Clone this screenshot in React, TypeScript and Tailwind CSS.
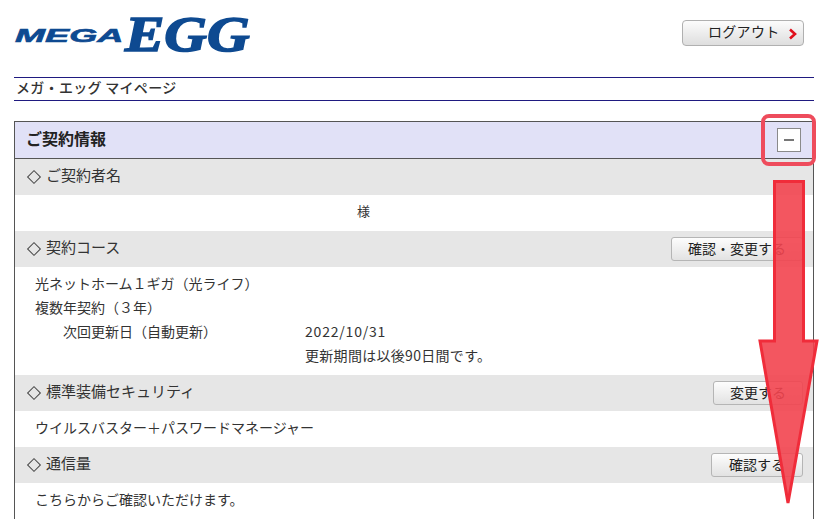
import React from 'react';

const jp = "font-['Noto_Sans_CJK_JP','Noto_Sans',sans-serif]";

const SectionHead = ({ title, action, actionWidth }: { title: string; action?: string; actionWidth?: string }) => (
  <div className="flex h-9 items-center justify-between bg-[#e6e6e6] pl-[11px] pr-[10px]">
    <div className="flex items-center gap-[4px] text-[15px] leading-none text-[#333]">
      <span className="mx-[3px] h-[10px] w-[10px] rotate-45 border border-[#444]" />
      <span className="pb-[5px]">{title}</span>
    </div>
    {action && (
      <button className={`flex h-6 items-center justify-center rounded-[3px] border border-[#b5b5b5] bg-gradient-to-b from-[#fdfdfd] to-[#e2e2e2] pb-[3px] text-sm text-[#222] ${actionWidth}`}>
        {action}
      </button>
    )}
  </div>
);

const Logo = () => (
  <div className="flex h-[36px] items-center italic leading-none text-[#0e4a91]">
    <span className="mt-[3px] w-[110px] origin-left scale-x-[1.9] font-['Liberation_Sans',sans-serif] text-[19px] font-bold [-webkit-text-stroke:0.6px_#0e4a91]">MEGA</span>
    <span className="origin-left scale-x-[1.18] font-['Liberation_Serif',serif] text-[50px] font-bold [-webkit-text-stroke:1.6px_#0e4a91]">EGG</span>
  </div>
);

export default function App() {
  return (
    <div className={`relative h-[519px] w-[830px] overflow-hidden bg-white ${jp}`}>
      <div className="pl-[14px] pr-[16px]">
        <header className="flex h-[77px] items-start justify-between pr-[10px]">
          <div className="pl-px pt-[16px]">
            <Logo />
          </div>
          <button className="relative mt-[20px] flex h-[26px] w-[122px] items-center rounded-[4px] border border-[#b0b0b0] bg-gradient-to-b from-[#fcfcfc] to-[#dedede] pb-[5px] pl-[25px] text-sm tracking-[0.3px] text-[#222]">
            ログアウト
            <svg className="absolute right-[5px] top-[7px]" width="10" height="12" viewBox="0 0 10 12" fill="none">
              <path d="M2 1.5 L7 6 L2 10.5" stroke="#e0101c" strokeWidth="2.6" />
            </svg>
          </button>
        </header>

        <div className="flex h-[24px] items-center border-y border-[#1f1a80] pb-[5px] pl-[2px] text-sm font-medium leading-none tracking-[0.3px] text-[#333]">
          メガ・エッグ マイページ
        </div>

        <section className="mt-[20px] border-x border-t border-[#555]">
          <div className="flex h-[37px] items-center justify-between border-b border-[#555] bg-[#e1e1f7] pl-[11px] pr-[12px]">
            <h2 className="pb-[5px] text-base font-bold text-[#222]">ご契約情報</h2>
            <button className="flex h-6 w-6 items-center justify-center border border-[#8a8a8a] bg-white">
              <span className="h-[2px] w-[10px] bg-[#777]" />
            </button>
          </div>

          <SectionHead title="ご契約者名" />
          <div className="flex h-9 items-center pb-[5px] pl-[342px] text-[13px] text-[#333]">様</div>

          <SectionHead title="契約コース" action="確認・変更する" actionWidth="w-[132px]" />
          <div className="flex h-[108px] flex-col gap-[2px] pl-[20px] pt-[5px] text-sm leading-[22px] text-[#333]">
            <p>光ネットホーム１ギガ（光ライフ）</p>
            <p>複数年契約（３年）</p>
            <div className="flex pl-[28px]">
              <span className="w-[242px]">次回更新日（自動更新）</span>
              <div className="flex flex-col gap-[2px]">
                <span className="tracking-[0.8px]">2022/10/31</span>
                <span className="tracking-[0.3px]">更新期間は以後90日間です。</span>
              </div>
            </div>
          </div>

          <SectionHead title="標準装備セキュリティ" action="変更する" actionWidth="w-[90px]" />
          <div className="flex h-9 items-center pb-[5px] pl-[20px] text-sm text-[#333]">ウイルスバスター＋パスワードマネージャー</div>

          <SectionHead title="通信量" action="確認する" actionWidth="w-[92px]" />
          <div className="flex h-9 items-center pb-[5px] pl-[20px] text-sm text-[#333]">こちらからご確認いただけます。</div>
        </section>
      </div>

      {/* annotation drawn over the screenshot */}
      <div className="absolute left-[761px] top-[114px] h-[52px] w-[55px] rounded-[8px] border-[4px] border-[#ee4c5c]" />
      <svg className="absolute left-0 top-0" width="830" height="519" viewBox="0 0 830 519" fill="none">
        <path
          d="M774.5 181.5 H803.5 V341 H817 L788 503 L760 341 H774.5 Z"
          fill="#f2444f"
          fillOpacity="0.9"
          stroke="#f02c3a"
          strokeWidth="3"
        />
      </svg>
    </div>
  );
}
